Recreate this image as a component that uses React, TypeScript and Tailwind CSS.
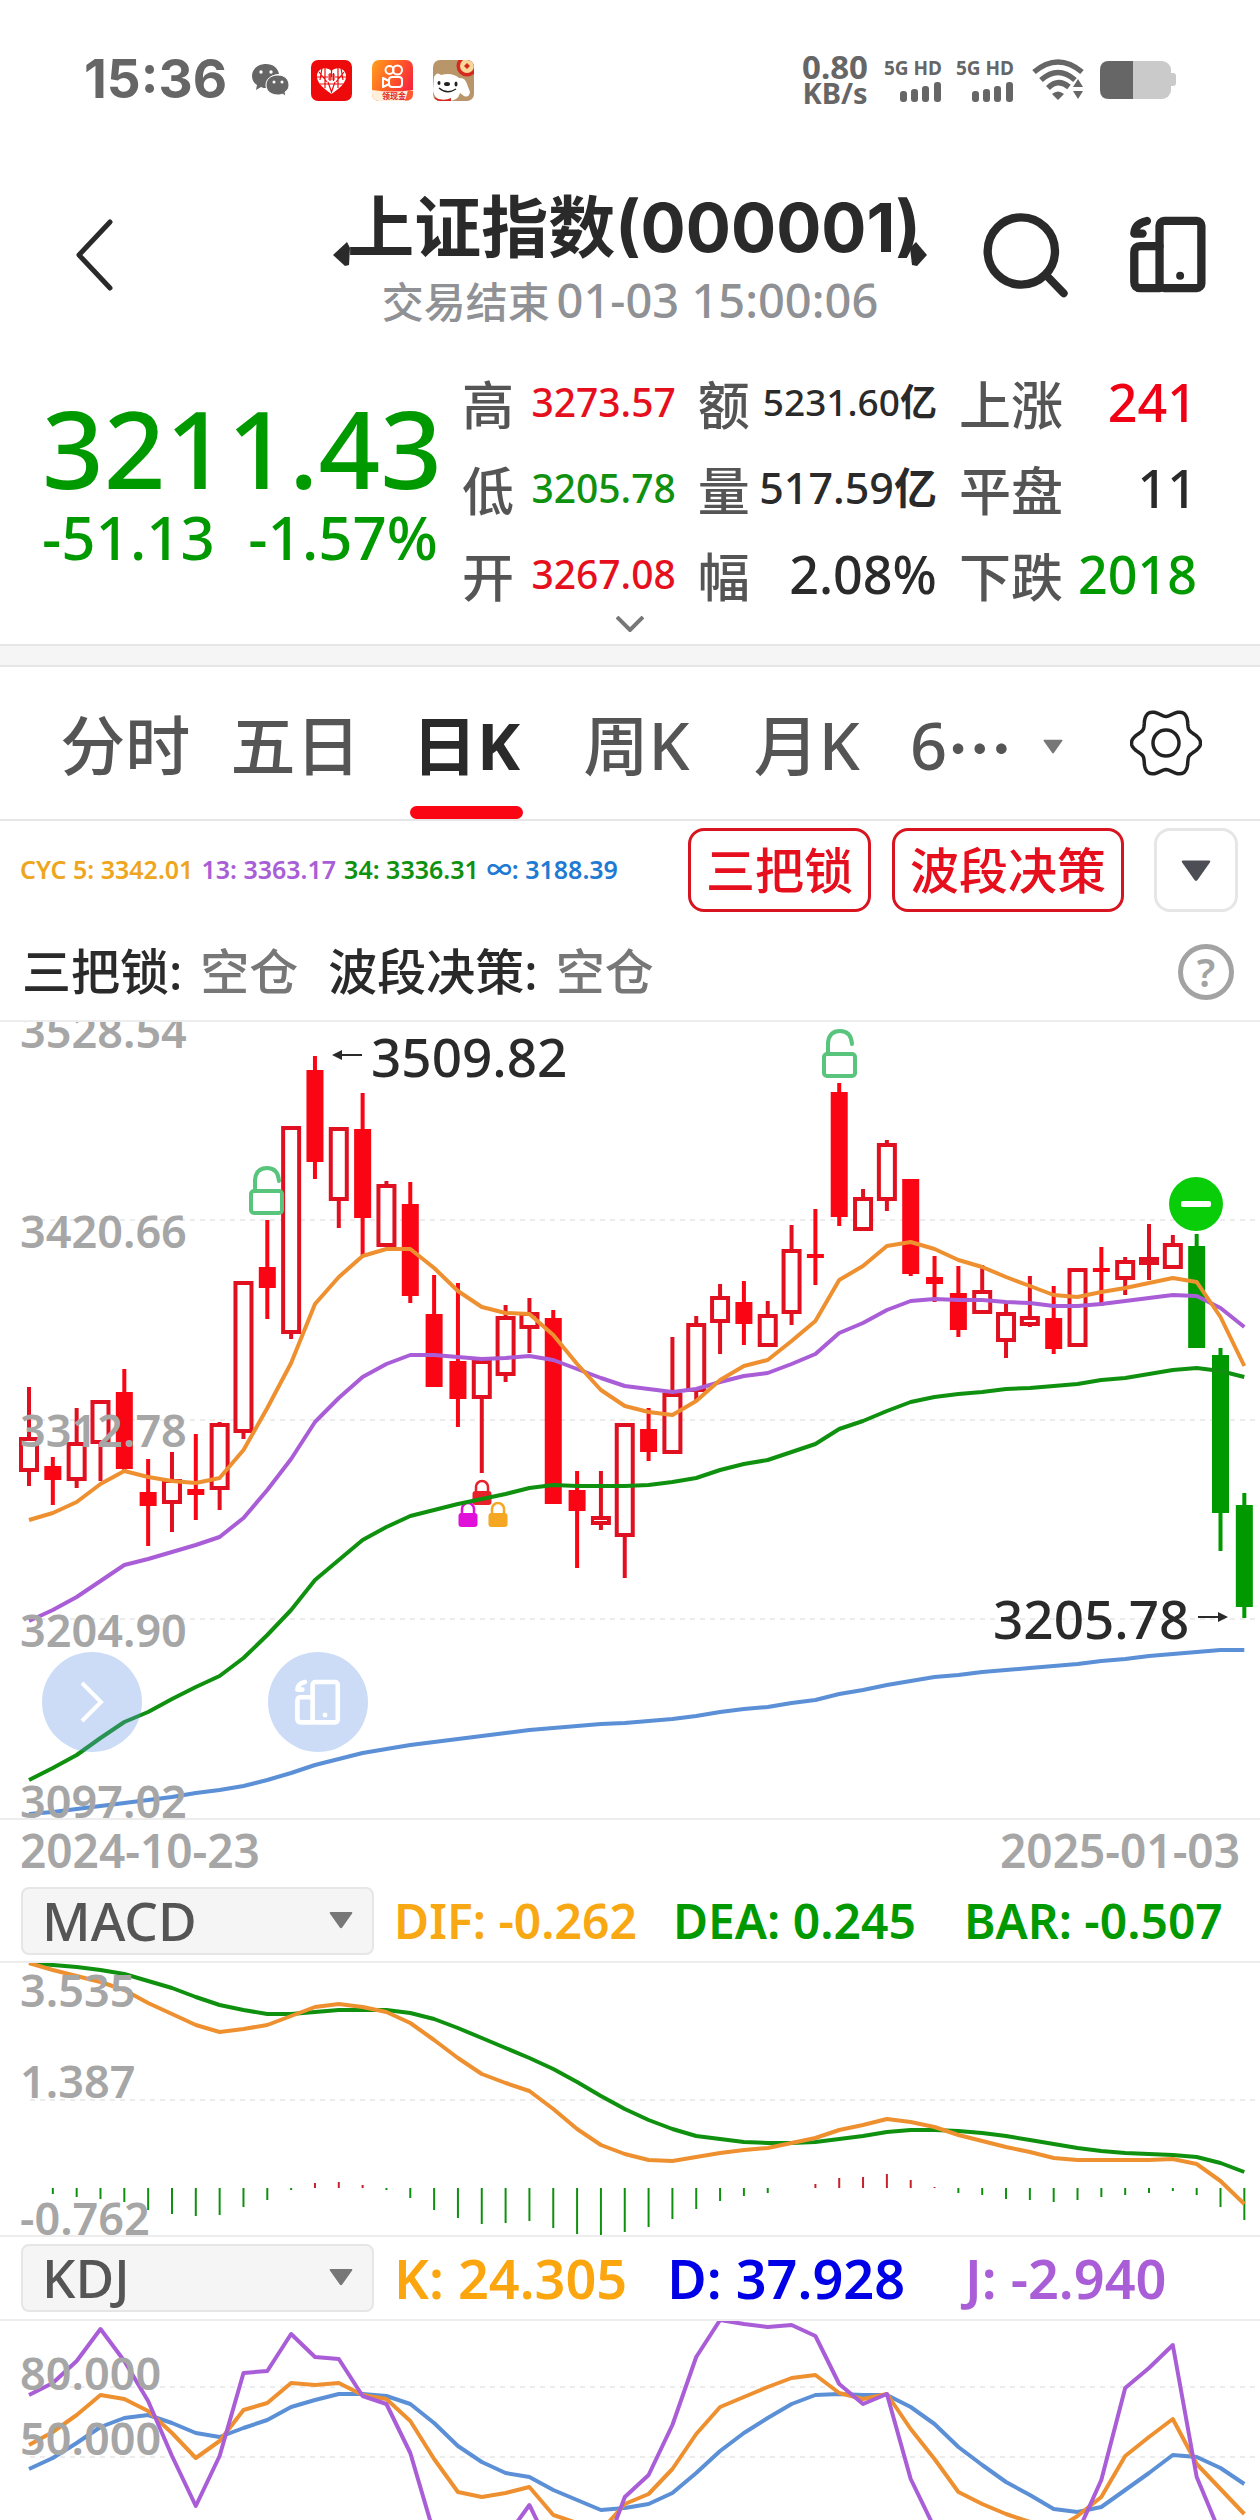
import type { ReactNode } from "react";

type Candle = [high: number, top: number, bottom: number, low: number, kind: "up" | "down" | "fall"];

const STEP = 23.83;
const px = (i: number) => 29 + i * STEP;

const candles: Candle[] = [
  [1387, 1437, 1472, 1486, "up"],
  [1457, 1466, 1480, 1505, "down"],
  [1408, 1442, 1481, 1488, "up"],
  [1400, 1400, 1444, 1481, "up"],
  [1369, 1392, 1469, 1470, "down"],
  [1459, 1492, 1506, 1546, "down"],
  [1452, 1479, 1504, 1532, "up"],
  [1434, 1489, 1495, 1520, "down"],
  [1422, 1423, 1490, 1510, "up"],
  [1281, 1281, 1433, 1439, "up"],
  [1220, 1267, 1288, 1319, "down"],
  [1126, 1126, 1334, 1339, "up"],
  [1056, 1070, 1162, 1179, "down"],
  [1127, 1127, 1201, 1228, "up"],
  [1093, 1129, 1218, 1255, "down"],
  [1181, 1184, 1247, 1247, "up"],
  [1182, 1204, 1296, 1303, "down"],
  [1275, 1314, 1387, 1387, "down"],
  [1283, 1361, 1399, 1427, "down"],
  [1360, 1360, 1399, 1473, "up"],
  [1305, 1316, 1376, 1382, "up"],
  [1298, 1312, 1329, 1353, "up"],
  [1310, 1318, 1504, 1504, "down"],
  [1471, 1490, 1511, 1568, "down"],
  [1471, 1516, 1525, 1530, "up"],
  [1423, 1423, 1537, 1578, "up"],
  [1408, 1429, 1452, 1461, "down"],
  [1337, 1393, 1454, 1454, "up"],
  [1316, 1323, 1392, 1400, "up"],
  [1284, 1296, 1323, 1354, "up"],
  [1281, 1302, 1324, 1345, "down"],
  [1301, 1314, 1347, 1347, "up"],
  [1225, 1249, 1314, 1325, "up"],
  [1209, 1254, 1258, 1285, "down"],
  [1083, 1092, 1217, 1226, "down"],
  [1189, 1197, 1231, 1231, "up"],
  [1140, 1143, 1201, 1211, "up"],
  [1179, 1179, 1274, 1276, "down"],
  [1256, 1277, 1284, 1302, "down"],
  [1266, 1293, 1330, 1337, "down"],
  [1265, 1290, 1314, 1314, "up"],
  [1302, 1312, 1342, 1358, "up"],
  [1276, 1316, 1326, 1327, "up"],
  [1286, 1318, 1349, 1354, "down"],
  [1268, 1268, 1347, 1347, "up"],
  [1247, 1268, 1272, 1306, "down"],
  [1257, 1260, 1280, 1295, "up"],
  [1224, 1257, 1265, 1280, "up"],
  [1235, 1243, 1269, 1269, "up"],
  [1234, 1246, 1348, 1348, "fall"],
  [1348, 1355, 1513, 1551, "fall"],
  [1493, 1505, 1607, 1618, "fall"],
];

const cyc5 = [
  1520, 1513, 1502, 1484, 1471, 1477, 1481, 1483, 1478, 1450, 1408, 1363, 1304, 1277, 1256, 1249, 1249, 1268,
  1291, 1307, 1313, 1314, 1335, 1364, 1390, 1406, 1412, 1415, 1401, 1380, 1366, 1360, 1341, 1321, 1280, 1266,
  1246, 1242, 1249, 1260, 1267, 1277, 1286, 1295, 1297, 1292, 1288, 1283, 1278, 1282, 1317, 1366,
];
const cyc13 = [
  1621, 1610, 1597, 1581, 1565, 1559, 1552, 1545, 1537, 1518, 1490, 1459, 1422, 1398, 1377, 1364, 1355, 1355,
  1357, 1359, 1358, 1356, 1360, 1369, 1378, 1386, 1389, 1392, 1389, 1382, 1376, 1373, 1364, 1354, 1333, 1323,
  1310, 1301, 1299, 1300, 1300, 1302, 1303, 1306, 1306, 1304, 1301, 1298, 1295, 1296, 1308, 1327,
];
const cyc34 = [
  1780, 1768, 1755, 1738, 1722, 1712, 1699, 1687, 1676, 1658, 1635, 1610, 1580, 1560, 1540, 1527, 1516, 1510,
  1504, 1499, 1494, 1488, 1485, 1486, 1486, 1486, 1485, 1482, 1478, 1470, 1464, 1460, 1452, 1444, 1429, 1421,
  1411, 1402, 1397, 1394, 1392, 1389, 1388, 1386, 1384, 1380, 1378, 1374, 1370, 1368, 1371, 1377,
];
const cycAll = [
  1814, 1812, 1809, 1806, 1803, 1800, 1797, 1793, 1790, 1786, 1780, 1773, 1765, 1759, 1753, 1749, 1745, 1742,
  1739, 1736, 1733, 1730, 1728, 1726, 1724, 1723, 1721, 1719, 1716, 1712, 1709, 1707, 1703, 1700, 1694, 1690,
  1685, 1681, 1677, 1675, 1672, 1670, 1668, 1666, 1664, 1661, 1659, 1656, 1654, 1652, 1650, 1650,
];

const dea = [
  1962, 1964, 1966, 1969, 1973, 1980, 1987, 1996, 2004, 2009, 2013, 2013, 2011, 2009, 2009, 2009, 2012, 2018,
  2027, 2037, 2047, 2057, 2068, 2081, 2095, 2108, 2119, 2128, 2135, 2138, 2141, 2142, 2142, 2141, 2138, 2135,
  2131, 2129, 2129, 2130, 2132, 2135, 2139, 2143, 2147, 2150, 2152, 2153, 2154, 2156, 2162, 2171,
];
const dif = [
  1962, 1969, 1975, 1981, 1989, 2002, 2013, 2024, 2031, 2028, 2024, 2015, 2006, 2003, 2006, 2011, 2022, 2039,
  2057, 2073, 2082, 2090, 2108, 2128, 2144, 2153, 2159, 2160, 2156, 2152, 2149, 2147, 2142, 2137, 2129, 2124,
  2118, 2121, 2126, 2134, 2140, 2146, 2151, 2157, 2159, 2159, 2159, 2159, 2158, 2163, 2180, 2203,
];
// positive values hang below the zero line
const macdBars = [
  0, 6, 9, 11, 14, 22, 26, 28, 27, 19, 12, 2, -5, -6, -3, 2, 10, 22, 30, 36, 35, 33, 40, 46, 48, 44, 39, 31, 21,
  13, 8, 5, 0, -4, -10, -11, -14, -8, -1, 5, 7, 11, 12, 14, 12, 9, 7, 5, 3, 7, 19, 32,
];

const kLine = [
  2444, 2431, 2414, 2394, 2398, 2410, 2432, 2457, 2440, 2409, 2402, 2382, 2384, 2382, 2394, 2398, 2420, 2458,
  2491, 2496, 2492, 2486, 2514, 2522, 2530, 2503, 2493, 2468, 2433, 2406, 2396, 2386, 2377, 2374, 2392, 2398,
  2393, 2428, 2458, 2491, 2503, 2513, 2521, 2530, 2515, 2496, 2455, 2436, 2418, 2463, 2488, 2513,
];
const dLine = [
  2468, 2457, 2442, 2426, 2417, 2414, 2422, 2432, 2436, 2427, 2419, 2406, 2399, 2393, 2393, 2395, 2403, 2422,
  2445, 2461, 2472, 2476, 2489, 2499, 2509, 2507, 2503, 2492, 2472, 2450, 2432, 2417, 2403, 2394, 2393, 2394,
  2394, 2406, 2423, 2446, 2464, 2481, 2494, 2508, 2511, 2506, 2489, 2472, 2454, 2456, 2467, 2483,
];
const jLine = [
  2394, 2382, 2360, 2328, 2360, 2400, 2455, 2505, 2455, 2372, 2370, 2333, 2356, 2358, 2395, 2403, 2452, 2533,
  2600, 2600, 2537, 2504, 2553, 2600, 2560, 2496, 2474, 2424, 2356, 2319, 2323, 2326, 2324, 2335, 2383, 2403,
  2393, 2478, 2527, 2570, 2600, 2600, 2600, 2570, 2532, 2479, 2387, 2367, 2344, 2476, 2533, 2560,
];

const toPoints = (ys: number[]) => ys.map((y, i) => `${px(i).toFixed(1)},${y}`).join(" ");

const Line = ({ ys, color }: { ys: number[]; color: string }) => (
  <polyline points={toPoints(ys)} fill="none" stroke={color} strokeWidth="4" strokeLinejoin="round" />
);

const Grid = ({ y }: { y: number }) => (
  <line x1="30" x2="1256" y1={y} y2={y} stroke="#ececec" strokeWidth="2" strokeDasharray="5 5" />
);

const Axis = ({ y, children }: { y: number; children: ReactNode }) => (
  <text x="20" y={y} fontSize="45" fontWeight="600" fill="#a6a6a6">
    {children}
  </text>
);

const Caret = ({ className }: { className: string }) => (
  <svg viewBox="0 0 24 18" className={className} aria-hidden="true">
    <path d="M1.5 1h21q1.500 0 .6 1.500L13.200 16.500q-1.200 1.500-2.400 0L.9 2.500Q0 1 1.500 1z" fill="currentColor" />
  </svg>
);

const ScreensIcon = ({ className, weight }: { className: string; weight: number }) => (
  <svg viewBox="500 75 250 245" className={className} aria-hidden="true" fill="none" stroke="currentColor">
    <g strokeWidth={weight} strokeLinejoin="round" strokeLinecap="round">
      <rect x="598" y="95" width="126" height="202" rx="14" />
      <path d="M598 171H540q-18 0-18 18V279q0 18 18 18H598" />
      <path d="M560 95Q524 102 522 133H547" />
    </g>
    <circle cx="660" cy="260" r="12" fill="currentColor" stroke="none" />
  </svg>
);

const Gear = () => {
  const points = Array.from({ length: 120 }, (_, i) => {
    const t = (i / 120) * Math.PI * 2;
    const r = 30.5 + 4 * Math.cos(6 * t);
    return `${(36 + r * Math.cos(t)).toFixed(1)},${(36 + r * Math.sin(t)).toFixed(1)}`;
  }).join(" ");
  return (
    <svg viewBox="0 0 72 72" className="w-[72px] h-[72px]" fill="none" stroke="#222" strokeWidth="3.500">
      <polygon points={points} strokeLinejoin="round" />
      <circle cx="36" cy="36" r="13" />
    </svg>
  );
};

const Signal = () => (
  <div className="flex flex-col items-end gap-1">
    <span className="text-[19px] leading-5 font-bold">5G HD</span>
    <svg viewBox="0 0 42 20" className="w-[42px] h-5" fill="currentColor">
      <rect x="0" y="9" width="7" height="11" rx="3" />
      <rect x="11" y="7" width="7" height="13" rx="3" />
      <rect x="22" y="4" width="7" height="16" rx="3" />
      <rect x="34" y="0" width="7" height="20" rx="3" />
    </svg>
  </div>
);

const StatusBar = () => (
  <div className="flex items-center h-40 px-[84px] text-[#666]">
    <span className="font-['Inter',sans-serif] text-[53px] font-bold">15:36</span>
    <svg viewBox="0 0 40 34" className="w-10 h-[34px] ml-6" fill="currentColor">
      <path d="M15 1C7 1 1 6 1 13c0 4 2 7 5 9l-1 5 5-3c2 1 3 1 5 1-1-8 5-14 13-14C27 5 22 1 15 1z" />
      <path d="M27 12c-7 0-12 4-12 10s5 10 12 10c1 0 3 0 4-1l4 2-1-4c3-2 4-4 4-7 0-6-5-10-11-10z" stroke="#fff" />
      <g fill="#fff">
        <circle cx="10" cy="9" r="1.700" />
        <circle cx="20" cy="9" r="1.700" />
        <circle cx="23" cy="19" r="1.500" />
        <circle cx="31" cy="19" r="1.500" />
      </g>
    </svg>
    <svg viewBox="0 0 41 41" className="w-[41px] h-[41px] ml-5">
      <rect width="41" height="41" rx="7" fill="#ee0a0a" />
      <path d="M20.500 34C12 28 5 22 6 15c1-7 10-9 14.500-4C25 6 34 8 35 15c1 7-6 13-14.500 19z" fill="#fff" />
      <path
        d="M6 17h29M9 24h23M14 8v20M27 8v20M20.500 10v7M8 12l8 10M33 12l-8 10M17 22l3.500 10L24 22M11 8l-2 12M30 8l2 12"
        stroke="#ee0a0a"
        strokeWidth="1.200"
        fill="none"
      />
      <path d="M17 15h7M17 19h7M19 13v8M22.500 13v8" stroke="#ee0a0a" strokeWidth="1.200" />
    </svg>
    <svg viewBox="0 0 41 41" className="w-[41px] h-[41px] ml-5">
      <defs>
        <linearGradient id="ks" x1="0" y1="0" x2="1" y2="0.500">
          <stop offset="0" stopColor="#ffa01e" />
          <stop offset="0.500" stopColor="#ff6423" />
          <stop offset="1" stopColor="#f8283c" />
        </linearGradient>
        <clipPath id="ksr">
          <rect width="41" height="41" rx="7" />
        </clipPath>
      </defs>
      <g clipPath="url(#ksr)">
        <rect width="41" height="41" fill="url(#ks)" />
        <g fill="none" stroke="#fff" strokeWidth="2">
          <circle cx="17.500" cy="10" r="4" />
          <circle cx="25.500" cy="10" r="4.500" />
          <rect x="17" y="17" width="13" height="10" rx="3" />
          <path d="M17 21l-6-3v9l6-3z" strokeLinejoin="round" />
        </g>
        <path d="M0 30q20 3 41 0v11H0z" fill="#fff0dc" />
        <path d="M36 30l5 1v8l-8 2z" fill="#ff5a32" />
        <text x="10" y="39" fontSize="8" fontWeight="700" fill="#e02020">
          领现金
        </text>
      </g>
    </svg>
    <svg viewBox="0 0 41 41" className="w-[41px] h-[41px] ml-5">
      <defs>
        <clipPath id="jdr">
          <rect width="41" height="41" rx="7" />
        </clipPath>
      </defs>
      <g clipPath="url(#jdr)">
        <rect width="41" height="41" fill="#b9956a" />
        <circle cx="34" cy="6" r="10.500" fill="#d5291f" />
        <circle cx="34" cy="6" r="7" fill="#f8d79a" />
        <path d="M34 3l3 3-3 3-3-3z" fill="#d5291f" />
        <path d="M1 17q3-6 7-2 11-3 18 3 6-1 8 6l3 8q-1 6-6 4l-4-3q-2 8-12 8Q1 41 0 30z" fill="#fff" />
        <path d="M0 37q10 5 18 1v3H0z" fill="#d5291f" />
        <ellipse cx="6" cy="23" rx="1.500" ry="2" fill="#222" />
        <ellipse cx="23" cy="24" rx="1.500" ry="2.500" fill="#222" />
        <ellipse cx="14" cy="24" rx="3" ry="2" fill="#222" />
        <path d="M6 28q8 7 17 1" stroke="#222" strokeWidth="1.300" fill="none" />
      </g>
    </svg>
    <div className="flex items-center ml-auto">
      <div className="flex flex-col items-center text-[29px] leading-[26px] font-bold">
        <span className="text-[33px]">0.80</span>
        <span>KB/s</span>
      </div>
      <div className="flex gap-[14px] ml-4">
        <Signal />
        <Signal />
      </div>
      <svg viewBox="0 0 52 42" className="w-[52px] h-[42px] ml-[18px]" fill="none" stroke="currentColor">
        <g strokeWidth="5.500">
          <path d="M2 13Q26-7 50 13" />
          <path d="M9 21Q26 6 43 21" />
          <path d="M16 29Q26 19 37 28" />
        </g>
        <path d="M20 35q6-5 12 0l-6 6zM46 20l5 8H41zM46 40l5-8H41z" fill="currentColor" stroke="none" />
      </svg>
      <svg viewBox="0 0 76 38" className="w-[76px] h-[38px] ml-4">
        <rect x="0" y="0" width="71" height="38" rx="9" fill="#cacaca" />
        <rect x="68" y="12" width="8" height="13" rx="3" fill="#cacaca" />
        <path d="M9 0H33V38H9q-9 0-9-9V9q0-9 9-9z" fill="#666" />
      </svg>
    </div>
  </div>
);

const Header = () => (
  <header className="grid grid-cols-[1fr_auto_1fr] items-center h-[190px] px-[50px] text-[#2a2a2a]">
    <button type="button" aria-label="返回" className="w-11 h-[76px] ml-[22px]">
      <svg viewBox="0 0 44 76" className="w-11 h-[76px]" fill="none" stroke="currentColor" strokeWidth="5">
        <path d="M38 5L7 38l31 33" strokeLinecap="round" strokeLinejoin="round" />
      </svg>
    </button>
    <div className="flex flex-col items-center pt-4">
      <div className="flex items-end">
        <svg viewBox="0 0 18 24" className="w-[18px] h-6 -mr-1" fill="currentColor">
          <path d="M0 13L14 0l3 6-1 17-4 1z" />
        </svg>
        <h1 className="font-['Inter','Noto_Sans_CJK_SC',sans-serif] text-[67px] leading-[76px] font-bold">
          上证指数(000001)
        </h1>
        <svg viewBox="0 0 18 24" className="w-[18px] h-6 -ml-3" fill="currentColor">
          <path d="M18 13L7 0 1 6l2 17 5 1z" />
        </svg>
      </div>
      <p className="text-[42px] leading-[68px] text-[#8f9194] font-medium">
        交易结束 <span className="-ml-1 text-[47px]">01-03 15:00:06</span>
      </p>
    </div>
    <div className="flex justify-end items-center gap-[56px]">
      <button type="button" aria-label="搜索">
        <svg viewBox="60 60 270 270" className="w-[90px] h-[90px]" fill="none" stroke="currentColor">
          <circle cx="181" cy="183" r="101" strokeWidth="25" />
          <path d="M258 258l50 52" strokeWidth="24" strokeLinecap="round" />
        </svg>
      </button>
      <button type="button" aria-label="多屏">
        <ScreensIcon className="w-[83px] h-[82px]" weight={25} />
      </button>
    </div>
  </header>
);

const Stat = ({ label, value, className }: { label: string; value: ReactNode; className: string }) => (
  <div className="flex items-center justify-between h-[86px] whitespace-nowrap">
    <dt className="text-[52px] font-medium text-[#555]">{label}</dt>
    <dd className={className}>{value}</dd>
  </div>
);

const Quote = () => (
  <section className="pt-3">
    <div className="flex">
      <div className="w-[462px] pl-[42px] pr-6 pt-[36px] text-[#009900] whitespace-nowrap">
        <div className="text-[108px] leading-[100px] font-medium">3211.43</div>
        <div className="flex justify-between text-[60px] leading-[78px] font-medium">
          <span>-51.13</span>
          <span>-1.57%</span>
        </div>
      </div>
      <dl className="flex-1 grid grid-cols-[212fr_237fr_236fr] gap-x-[22px] pr-[63px] font-medium">
        <Stat label="高" value="3273.57" className="pb-1.5 text-[39px] text-[#e60f1e]" />
        <Stat label="额" value={<>5231.60<b>亿</b></>} className="pb-1.5 text-[37px] text-[#2a2a2a]" />
        <Stat label="上涨" value="241" className="pb-1.5 text-[52px] text-[#f00014]" />
        <Stat label="低" value="3205.78" className="pb-1.5 text-[39px] text-[#0f910f]" />
        <Stat label="量" value={<>517.59<b>亿</b></>} className="pb-1.5 text-[43px] text-[#2a2a2a]" />
        <Stat label="平盘" value="11" className="pb-1.5 text-[52px] text-[#2a2a2a]" />
        <Stat label="开" value="3267.08" className="pb-1.5 text-[39px] text-[#e60f1e]" />
        <Stat label="幅" value="2.08%" className="pb-1.5 text-[52px] text-[#2a2a2a]" />
        <Stat label="下跌" value="2018" className="pb-1.5 text-[52px] text-[#009900]" />
      </dl>
    </div>
    <button type="button" aria-label="展开" className="flex justify-center w-full h-9 -mt-3 pt-2">
      <svg viewBox="0 0 28 16" className="w-7 h-4" fill="none" stroke="#777" strokeWidth="4">
        <path d="M1 1l13 13L27 1" />
      </svg>
    </button>
  </section>
);

const Tabs = () => (
  <nav className="flex items-center h-[154px] pl-10 pr-[58px] border-b-2 border-[#e6e6e6] text-[65px] text-[#555] font-medium">
    <button type="button" className="flex-1 pt-1.5">分时</button>
    <button type="button" className="flex-1 pt-1.5">五日</button>
    <button type="button" className="relative flex-1 h-full pt-1.5 font-bold text-[#2a2a2a]">
      日K
      <span className="absolute bottom-0 left-1/2 w-[113px] h-[13px] -ml-14 rounded-full bg-[#fa0514]"></span>
    </button>
    <button type="button" className="flex-1 pt-1.5">周K</button>
    <button type="button" className="flex-1 pt-1.5">月K</button>
    <button type="button" className="flex items-center w-[238px] pl-[18px] pt-1.5">
      6<span className="font-['Noto_Sans_CJK_SC',sans-serif] font-bold">…</span>
      <Caret className="w-[22px] h-[15px] ml-[30px] text-[#777]" />
    </button>
    <button type="button" aria-label="设置">
      <Gear />
    </button>
  </nav>
);

const Indicators = () => (
  <>
    <div className="flex items-center h-[98px] pl-5 pr-[22px] whitespace-nowrap">
      <div className="flex gap-2 text-[25px] font-semibold">
        <span className="text-[#eea620]">CYC 5: 3342.01</span>
        <span className="text-[#a95dd6]">13: 3363.17</span>
        <span className="text-[#0f910f]">34: 3336.31</span>
        <span className="text-[#1e7ad2]">∞: 3188.39</span>
      </div>
      <button type="button" className="ml-auto h-[84px] px-[15px] border-3 border-[#d81420] rounded-2xl text-[49px] leading-none font-medium text-[#e60f1e]">
        三把锁
      </button>
      <button type="button" className="ml-[21px] h-[84px] px-[15px] border-3 border-[#d81420] rounded-2xl text-[49px] leading-none font-medium text-[#e60f1e]">
        波段决策
      </button>
      <button type="button" aria-label="更多" className="flex items-center justify-center ml-[30px] w-[84px] h-[84px] border-3 border-[#e6e6e6] rounded-2xl">
        <Caret className="w-[30px] h-[23px] text-[#4d4d55]" />
      </button>
    </div>
    <div className="flex items-center h-[101px] pl-[22px] pr-[26px] pt-1 text-[49px] font-medium whitespace-nowrap text-[#2a2a2a]">
      <span>三把锁:</span>
      <span className="ml-[18px] text-[#777]">空仓</span>
      <span className="ml-[30px]">波段决策:</span>
      <span className="ml-[18px] text-[#777]">空仓</span>
      <button type="button" aria-label="帮助" className="flex items-center justify-center ml-auto w-14 h-14 border-[5px] border-[#a3a3a3] rounded-full text-[40px] leading-none font-semibold text-[#a3a3a3]">
        ?
      </button>
    </div>
  </>
);

const Unlock = ({ x, y }: { x: number; y: number }) => (
  <g transform={`translate(${x} ${y})`} fill="none" stroke="#58c47c" strokeWidth="4">
    <rect x="-15" y="25" width="31" height="22" rx="3" />
    <path d="M-11 25V14Q-10 2 1 2T13 15" strokeLinecap="round" />
  </g>
);

const Padlock = ({ x, y, color }: { x: number; y: number; color: string }) => (
  <g transform={`translate(${x} ${y})`}>
    <path d="M-6 13V8a6 6 0 0 1 12 0v5" fill="none" stroke={color} strokeWidth="2.500" />
    <rect x="-9.500" y="12" width="19" height="14" rx="3" fill={color} />
  </g>
);

const CandleShape = ({ x, data }: { x: number; data: Candle }) => {
  const [high, top, bottom, low, kind] = data;
  const color = kind === "fall" ? "#009900" : kind === "down" ? "#fa0514" : "#e01020";
  return (
    <g stroke={color}>
      <path d={`M${x} ${high}V${top}M${x} ${bottom}V${low}`} strokeWidth="4" />
      {kind === "up" ? (
        <rect x={x - 8} y={top + 2} width="16" height={bottom - top - 4} fill="#fff" strokeWidth="4" />
      ) : (
        <rect x={x - 8.5} y={top} width="17" height={bottom - top} fill={color} stroke="none" />
      )}
    </g>
  );
};

const PriceChart = () => (
  <div className="relative border-y-2 border-[#ededed]">
    <svg viewBox="0 1022 1260 796" className="block w-full" role="img" aria-label="日K线">
      <Grid y={1220} />
      <Grid y={1420} />
      <Grid y={1619} />
      {candles.map((c, i) => (
        <CandleShape key={i} x={px(i)} data={c} />
      ))}
      <Unlock x={266} y={1166} />
      <Unlock x={839} y={1029} />
      <Padlock x={482} y={1479} color="#e8202a" />
      <Padlock x={468} y={1501} color="#e010d8" />
      <Padlock x={498} y={1501} color="#f5a623" />
      <Line ys={cycAll} color="#5b8fd6" />
      <Line ys={cyc34} color="#0f910f" />
      <Line ys={cyc13} color="#a95dd6" />
      <Line ys={cyc5} color="#ee9030" />
      <circle cx="1196" cy="1204" r="27" fill="#0acd0a" />
      <rect x="1181" y="1201" width="30" height="6" rx="2" fill="#fff" />
      <Axis y={1048}>3528.54</Axis>
      <Axis y={1248}>3420.66</Axis>
      <Axis y={1447}>3312.78</Axis>
      <Axis y={1647}>3204.90</Axis>
      <Axis y={1818}>3097.02</Axis>
      <g fill="#2a2a2a" stroke="none" fontSize="53" fontWeight="500">
        <text x="371" y="1077">3509.82</text>
        <path d="M332 1055l10-5v4h20v2h-20v4z" />
        <text x="993" y="1639">3205.78</text>
        <path d="M1228 1617l-10-5v4h-20v2h20v4z" />
      </g>
    </svg>
    <div className="absolute left-[42px] bottom-[66px] flex gap-[126px] text-white">
      <button type="button" aria-label="下一个" className="flex items-center justify-center w-[100px] h-[100px] rounded-full bg-[#6496e6]/33">
        <svg viewBox="0 0 24 42" className="w-6 h-[42px]" fill="none" stroke="currentColor" strokeWidth="4">
          <path d="M2 2l19 19L2 40" />
        </svg>
      </button>
      <button type="button" aria-label="横屏" className="flex items-center justify-center w-[100px] h-[100px] rounded-full bg-[#6496e6]/33">
        <ScreensIcon className="w-[50px] h-[49px]" weight={23} />
      </button>
    </div>
  </div>
);

const Picker = ({ name, options }: { name: string; options: string[] }) => (
  <label className="relative block shrink-0 w-[353px]">
    <span className="sr-only">{name}</span>
    <select className="block appearance-none w-full h-[68px] pl-[19px] rounded-lg border-2 border-[#e6e6e6] bg-[#f5f5f5] text-[53px] leading-[64px] text-[#555] font-medium">
      {options.map((o) => (
        <option key={o}>{o}</option>
      ))}
    </select>
    <Caret className="absolute right-[21px] top-6 w-6 h-[18px] text-[#777] pointer-events-none" />
  </label>
);

const MacdPanel = () => (
  <section>
    <div className="flex items-center h-20 pl-[21px] text-[48px] font-semibold whitespace-nowrap">
      <Picker name="副图指标一" options={["MACD", "KDJ", "RSI"]} />
      <span className="ml-5 text-[#f8a812]">DIF: -0.262</span>
      <span className="ml-9 text-[#009900]">DEA: 0.245</span>
      <span className="ml-12 text-[#009900]">BAR: -0.507</span>
    </div>
    <div className="border-y-2 border-[#ededed]">
      <svg viewBox="0 1962 1260 272" className="block w-full" role="img" aria-label="MACD">
        <Grid y={2099} />
        {macdBars.map((v, i) => (
          <path key={i} d={`M${px(i)} 2187v${v}`} stroke={v < 0 ? "#c8202c" : "#0f910f"} strokeWidth="2" />
        ))}
        <Line ys={dea} color="#0f910f" />
        <Line ys={dif} color="#ee9030" />
        <Axis y={2006}>3.535</Axis>
        <Axis y={2097}>1.387</Axis>
        <Axis y={2234}>-0.762</Axis>
      </svg>
    </div>
  </section>
);

const KdjPanel = () => (
  <section>
    <div className="flex items-center h-[82px] pl-[21px] text-[54px] font-semibold whitespace-nowrap">
      <Picker name="副图指标二" options={["KDJ", "MACD", "RSI"]} />
      <span className="ml-5 text-[#fba60f]">K: 24.305</span>
      <span className="ml-10 text-[#0000e6]">D: 37.928</span>
      <span className="ml-[60px] text-[#a95dd6]">J: -2.940</span>
    </div>
    <div className="border-t-2 border-[#ededed]">
      <svg viewBox="0 2320 1260 200" className="block w-full" role="img" aria-label="KDJ">
        <Grid y={2386} />
        <Grid y={2456} />
        <Line ys={dLine} color="#5b8fd6" />
        <Line ys={kLine} color="#ee9030" />
        <Line ys={jLine} color="#a95dd6" />
        <Axis y={2389}>80.000</Axis>
        <Axis y={2454}>50.000</Axis>
      </svg>
    </div>
  </section>
);

export default function App() {
  return (
    <main className="w-full overflow-hidden bg-white font-['Noto_Sans','Noto_Sans_CJK_SC',sans-serif]">
      <StatusBar />
      <Header />
      <Quote />
      <div className="h-[23px] border-y-2 border-[#e6e6e6] bg-[#f5f5f5]"></div>
      <Tabs />
      <Indicators />
      <PriceChart />
      <div className="flex justify-between h-[61px] px-5 text-[46px] leading-[61px] font-semibold text-[#a6a6a6]">
        <span>2024-10-23</span>
        <span>2025-01-03</span>
      </div>
      <MacdPanel />
      <KdjPanel />
    </main>
  );
}
